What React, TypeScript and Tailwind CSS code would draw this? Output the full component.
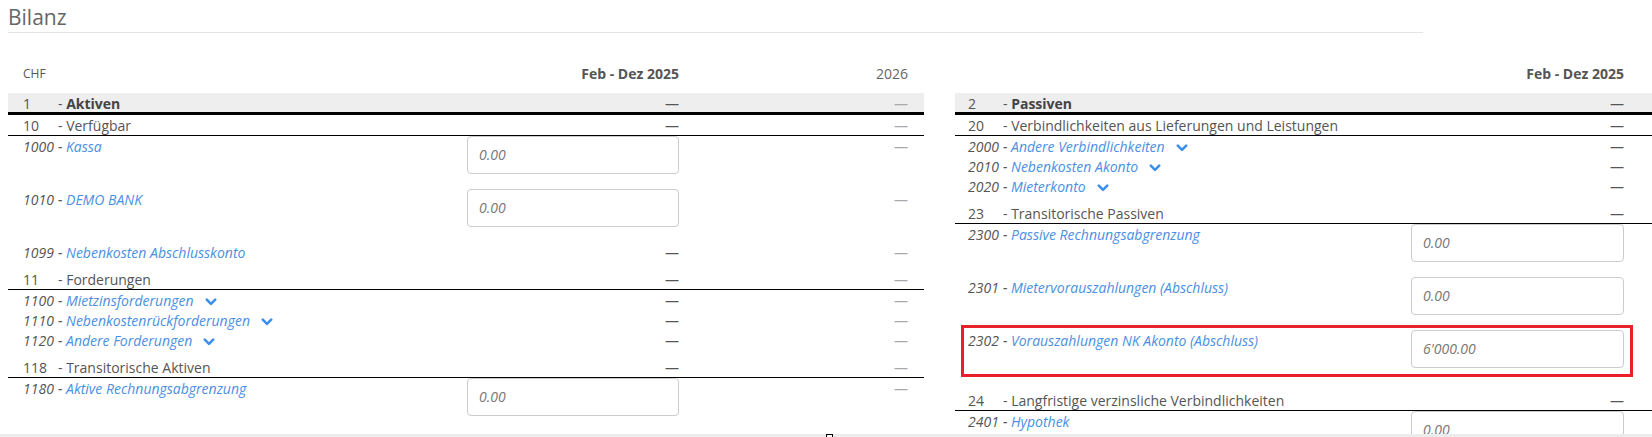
import React from "react";

type Row =
  | { kind: "main"; no: string; label: string }
  | { kind: "group"; no: string; label: string; gap?: boolean }
  | { kind: "acct"; no: string; label: string; chevron?: boolean }
  | { kind: "input"; no: string; label: string; value?: string };

const left: Row[] = [
  { kind: "main", no: "1", label: "Aktiven" },
  { kind: "group", no: "10", label: "Verfügbar" },
  { kind: "input", no: "1000", label: "Kassa" },
  { kind: "input", no: "1010", label: "DEMO BANK" },
  { kind: "acct", no: "1099", label: "Nebenkosten Abschlusskonto" },
  { kind: "group", no: "11", label: "Forderungen", gap: true },
  { kind: "acct", no: "1100", label: "Mietzinsforderungen", chevron: true },
  { kind: "acct", no: "1110", label: "Nebenkostenrückforderungen", chevron: true },
  { kind: "acct", no: "1120", label: "Andere Forderungen", chevron: true },
  { kind: "group", no: "118", label: "Transitorische Aktiven", gap: true },
  { kind: "input", no: "1180", label: "Aktive Rechnungsabgrenzung" },
];

const right: Row[] = [
  { kind: "main", no: "2", label: "Passiven" },
  { kind: "group", no: "20", label: "Verbindlichkeiten aus Lieferungen und Leistungen" },
  { kind: "acct", no: "2000", label: "Andere Verbindlichkeiten", chevron: true },
  { kind: "acct", no: "2010", label: "Nebenkosten Akonto", chevron: true },
  { kind: "acct", no: "2020", label: "Mieterkonto", chevron: true },
  { kind: "group", no: "23", label: "Transitorische Passiven", gap: true },
  { kind: "input", no: "2300", label: "Passive Rechnungsabgrenzung" },
  { kind: "input", no: "2301", label: "Mietervorauszahlungen (Abschluss)" },
  { kind: "input", no: "2302", label: "Vorauszahlungen NK Akonto (Abschluss)", value: "6'000.00" },
  { kind: "group", no: "24", label: "Langfristige verzinsliche Verbindlichkeiten", gap: true },
  { kind: "input", no: "2401", label: "Hypothek" },
];

function Chevron() {
  return (
    <svg width="12" height="8" viewBox="0 0 12 8" className="ml-[11px] inline-block">
      <path d="M1.8 1.6 L6 5.8 L10.2 1.6" fill="none" stroke="#3b8fea" strokeWidth="2.6" strokeLinecap="round" strokeLinejoin="round" />
    </svg>
  );
}

const Dash = ({ light }: { light?: boolean }) => (
  <span className={light ? "text-[#aaa]" : "text-[#555]"}>—</span>
);

function TableRow({ row, cols, withYear }: { row: Row; cols: string; withYear: boolean }) {
  if (row.kind === "main") {
    return (
      <div className={`grid ${cols} h-[22px] bg-[#eeeeee] border-b-[3px] border-black leading-[19px]`}>
        <div className="relative top-px text-[#555]">
          <span className="inline-block w-[35px]">{row.no}</span>- <b className="font-bold text-[#444]">{row.label}</b>
        </div>
        <div className="relative top-px text-right"><Dash /></div>
        {withYear && <div className="relative top-px text-right"><Dash light /></div>}
      </div>
    );
  }
  if (row.kind === "group") {
    return (
      <div className={`grid ${cols} border-b border-black leading-[20px] ${row.gap ? "pt-[7px]" : ""}`}>
        <div className="relative top-px whitespace-nowrap text-[#555]">
          <span className="inline-block w-[35px]">{row.no}</span>- {row.label}
        </div>
        <div className="relative top-px text-right"><Dash /></div>
        {withYear && <div className="relative top-px text-right"><Dash light /></div>}
      </div>
    );
  }
  const label = (
    <div className="relative top-px whitespace-nowrap italic">
      <span className="inline-block w-[35px] text-[#555]">{row.no}</span>
      <span className="text-[#555]">- </span>
      <span className="text-[#4a90e2]">{row.label}</span>
      {row.kind === "acct" && row.chevron && <Chevron />}
    </div>
  );
  if (row.kind === "acct") {
    return (
      <div className={`grid ${cols} h-[20px] leading-[20px]`}>
        {label}
        <div className="relative top-px text-right"><Dash /></div>
        {withYear && <div className="relative top-px text-right"><Dash light /></div>}
      </div>
    );
  }
  return (
    <div className={`grid ${cols} h-[53px] items-start leading-[20px]`}>
      {label}
      <div className="flex h-[38px] items-center rounded-[4px] border border-[#cccccc] bg-white pl-[11px] italic text-[#777]">
        {row.value ?? "0.00"}
      </div>
      {withYear && <div className="relative top-px text-right"><Dash light /></div>}
    </div>
  );
}

export default function App() {
  const leftCols = "grid-cols-[444px_212px_229px]";
  const rightCols = "grid-cols-[443px_213px]";
  return (
    <div className="relative h-[437px] w-[1652px] overflow-hidden bg-white font-['Open_Sans',sans-serif] text-[14px] text-[#555]">
      <div className="ml-2 w-[1415px] border-b border-[#e3e3e3] pt-[3px] pb-[-1px] text-[21px] leading-[29px] text-[#666]">
        Bilanz
      </div>

      <div className="mt-[30px] flex gap-[31px] pl-2">
        <div className="w-[916px] shrink-0">
          <div className={`grid ${leftCols} h-[30px] pl-[15px] pt-px leading-[20px]`}>
            <div className="text-[12px] text-[#555]">CHF</div>
            <div className="text-right font-bold text-[#555]">Feb - Dez 2025</div>
            <div className="text-right text-[#666]">2026</div>
          </div>
          {left.map((r) => (
            <div key={r.no} className="[&>div]:pl-[15px] [&>div]:pr-[16px]">
              <TableRow row={r} cols={leftCols} withYear />
            </div>
          ))}
        </div>

        <div className="w-[697px] shrink-0">
          <div className={`grid ${rightCols} h-[30px] pl-[13px] pt-px leading-[20px]`}>
            <div />
            <div className="text-right font-bold text-[#555]">Feb - Dez 2025</div>
          </div>
          {right.map((r) => (
            <div key={r.no} className="[&>div]:pl-[13px]">
              <TableRow row={r} cols={rightCols} withYear={false} />
            </div>
          ))}
        </div>
      </div>

      <div className="absolute left-[961px] top-[325px] h-[52px] w-[672px] border-[3px] border-[#e8202a]" />
      <div className="absolute bottom-0 left-0 h-[3px] w-full bg-[#ececec]" />
      <div className="absolute left-[826px] top-[434px] h-[5px] w-[7px] border border-black bg-white" />
    </div>
  );
}
